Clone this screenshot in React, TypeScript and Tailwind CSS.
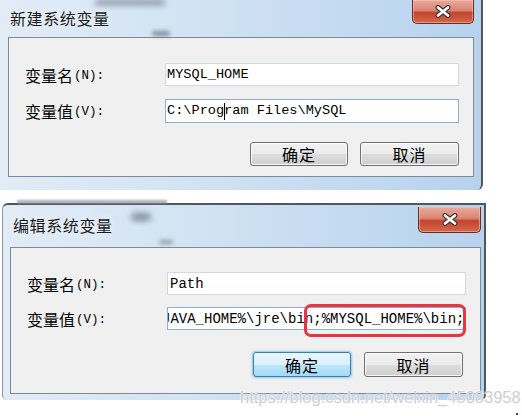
import React from "react";

const cjk = "font-['Noto_Sans_CJK_SC','Noto_Sans',sans-serif]";
const mono = "font-['Liberation_Mono','DejaVu_Sans_Mono',monospace]";

function CloseBtn({ w, h }: { w: string; h: string }) {
  return (
    <div
      className={`${w} ${h} rounded-b-[5px] border border-t-0 border-[#6b2a22] bg-[linear-gradient(#e9aa9d_0%,#d98673_45%,#c2432c_55%,#d46a4b_100%)] shadow-[inset_0_0_0_1px_rgba(255,200,190,0.5)] flex items-center justify-center`}
    >
      <svg width="18" height="13" viewBox="0 0 18 13">
        <path d="M4 2.5 L14 10.5 M14 2.5 L4 10.5" stroke="#3a3a3a" strokeWidth="5" strokeLinecap="round" />
        <path d="M4 2.5 L14 10.5 M14 2.5 L4 10.5" stroke="#ffffff" strokeWidth="2.6" strokeLinecap="round" />
      </svg>
    </div>
  );
}

function Label({ cn, key2 }: { cn: string; key2: string }) {
  return (
    <div className="flex items-center text-black">
      <span className={`${cjk} text-[16px] leading-none`}>{cn}</span>
      <span className={`${mono} text-[12.5px] leading-none ml-[1px] mt-[3px]`}>({key2}):</span>
    </div>
  );
}

function Btn({ label, focused, w, h }: { label: string; focused?: boolean; w: string; h: string }) {
  return (
    <div
      className={`${w} ${h} rounded-[3px] border flex items-center justify-center ${
        focused
          ? "border-[#3c7fb1] bg-[linear-gradient(#eaf6fd_0%,#d9f0fc_50%,#bee6fd_50%,#a7d9f5_100%)] shadow-[0_0_2px_1px_rgba(80,170,230,0.6)]"
          : "border-[#707070] bg-[linear-gradient(#f2f2f2_0%,#ebebeb_50%,#dddddd_50%,#cfcfcf_100%)] shadow-[inset_0_0_0_1px_rgba(255,255,255,0.8)]"
      }`}
    >
      <span className={`${cjk} text-[16px] leading-none text-black tracking-[1px]`}>{label}</span>
    </div>
  );
}

export default function App() {
  return (
    <div className="relative w-[522px] h-[416px] bg-white overflow-hidden flex flex-col">
      {/* Dialog 1 */}
      <div className="relative w-[483px] h-[190px] flex flex-col bg-[linear-gradient(90deg,#e2ecf7_0%,#d2e3f3_40%,#c2d9f0_75%,#b8d2ee_100%)] border-r-2 border-[#4e5660] rounded-br-[6px]">
        <div className="absolute left-[95px] top-0 w-[70px] h-[5px] rounded-full bg-[#5a6470] blur-[3px] opacity-70" />
        <div className="absolute left-[152px] top-[31px] w-[18px] h-[5px] rounded-full bg-[#4a5560] blur-[2px] opacity-60" />
        <div className="h-[37px] flex items-start justify-between pl-[10px] pr-[7px]">
          <span className={`${cjk} mt-[10px] text-[16px] leading-none tracking-[0.6px] text-[#1a1a1a] [text-shadow:0_0_6px_rgba(255,255,255,0.9)]`}>
            新建系统变量
          </span>
          <CloseBtn w="w-[62px]" h="h-[24px]" />
        </div>
        <div className="ml-[8px] mr-[7px] h-[140px] bg-[#f0f0f0] border border-[#7d8a98] flex flex-col pt-[25px] pl-[16px] pr-[14px]">
          <div className="flex items-center h-[23px]">
            <div className="w-[140px]">
              <Label cn="变量名" key2="N" />
            </div>
            <div className="w-[294px] h-[23px] bg-white border border-[#d3d9e1] flex items-center pl-[1px]">
              <span className={`${mono} text-[13.6px] leading-none text-black`}>MYSQL_HOME</span>
            </div>
          </div>
          <div className="flex items-center h-[24px] mt-[13px]">
            <div className="w-[140px]">
              <Label cn="变量值" key2="V" />
            </div>
            <div className="w-[294px] h-[24px] bg-white border border-[#8fb0d6] flex items-center pl-[1px]">
              <span className={`${mono} text-[13.6px] leading-none text-black whitespace-pre flex items-center`}>
                C:\Prog
                <span className="inline-block w-[1px] h-[17px] bg-black -mx-[0.5px]" />
                ram Files\MySQL
              </span>
            </div>
          </div>
          <div className="flex justify-end gap-[12px] mt-[19px]">
            <Btn label="确定" w="w-[98px]" h="h-[24px]" />
            <Btn label="取消" w="w-[99px]" h="h-[24px]" />
          </div>
        </div>
      </div>

      {/* Dialog 2 */}
      <div className="relative ml-[2px] mt-[13px] w-[484px] h-[197px] flex flex-col bg-[linear-gradient(90deg,#e2ecf7_0%,#d2e3f3_40%,#c2d9f0_75%,#b8d2ee_100%)] border-t-2 border-r-2 border-l border-[#4e5660] border-l-[#8a96a3] rounded-tl-[6px] rounded-b-[5px]">
        <div className="absolute left-[14px] top-[-5px] w-[150px] h-[4px] bg-[#8a8f96] blur-[1px] opacity-70" />
        <div className="absolute left-[128px] top-[8px] w-[20px] h-[8px] rounded-full bg-[#4a5560] blur-[3px] opacity-60" />
        <div className="absolute left-[156px] top-[35px] w-[14px] h-[4px] rounded-full bg-[#4a5560] blur-[2px] opacity-50" />
        <div className="h-[42px] flex items-start justify-between pl-[10px] pr-[3px]">
          <span className={`${cjk} mt-[12px] text-[16px] leading-none tracking-[0.6px] text-[#1a1a1a] [text-shadow:0_0_6px_rgba(255,255,255,0.9)]`}>
            编辑系统变量
          </span>
          <CloseBtn w="w-[63px]" h="h-[26px] mt-[2px]" />
        </div>
        <div className="ml-[7px] mr-[3px] h-[147px] bg-[#f0f0f0] border border-[#7d8a98] flex flex-col pt-[24px] pl-[16px] pr-[14px]">
          <div className="flex items-center h-[23px]">
            <div className="w-[140px]">
              <Label cn="变量名" key2="N" />
            </div>
            <div className="w-[299px] h-[23px] bg-white border border-[#d3d9e1] flex items-center pl-[2px]">
              <span className={`${mono} text-[14px] leading-none text-black`}>Path</span>
            </div>
          </div>
          <div className="flex items-center h-[23px] mt-[12px]">
            <div className="w-[140px]">
              <Label cn="变量值" key2="V" />
            </div>
            <div className="w-[299px] h-[23px] bg-white border border-[#8fb0d6] flex items-center overflow-hidden">
              <span className={`${mono} text-[14px] leading-none text-black whitespace-pre ml-[-6px] flex items-center`}>
                JAVA_HOME%\jre\bin;%MYSQL_HOME%\bin;
                <span className="inline-block w-[1px] h-[17px] bg-black" />
              </span>
            </div>
          </div>
          <div className="flex justify-end gap-[13px] mt-[22px] pr-[3px]">
            <Btn label="确定" focused w="w-[98px]" h="h-[25px]" />
            <Btn label="取消" w="w-[99px]" h="h-[25px]" />
          </div>
        </div>
      </div>

      {/* Red annotation */}
      <div className="absolute left-[304px] top-[304px] w-[162px] h-[33px] border-[3px] border-[#e8353f] rounded-[7px]" />

      {/* Watermark */}
      <div className="absolute left-[240px] top-[389px] font-['Liberation_Sans',Arial,sans-serif] text-[16.5px] leading-none text-[#cdd0d4] [text-shadow:0_0_1px_#fff,0_0_2px_#fff]">
        https://blog.csdn.net/weixin_45083958
      </div>
      <div className="absolute left-[516px] top-[413px] w-[2px] h-[2px] bg-[#2040c0]" />
    </div>
  );
}
